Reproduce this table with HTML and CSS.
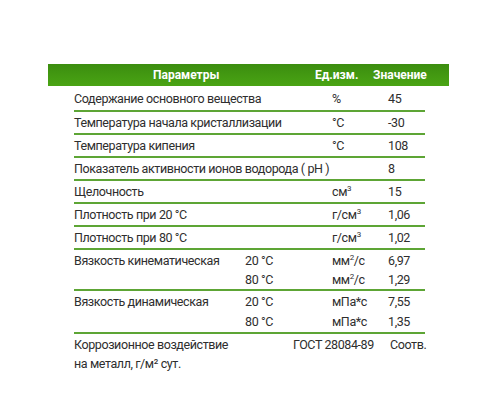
FILE: index.html
```html
<!DOCTYPE html>
<html lang="ru">
<head>
<meta charset="utf-8">
<link rel="stylesheet" href="styles.css">
</head>
<body>
<div class="wrap">
  <div class="head">
    <span class="h-param">Параметры</span>
    <span class="h-unit">Ед.изм.</span>
    <span class="h-val">Значение</span>
  </div>
  <div class="table">
    <div class="row first"><span class="name wide">Содержание основного вещества</span><span class="unit">%</span><span class="val">45</span></div>
    <div class="row"><span class="name wide">Температура начала кристаллизации</span><span class="unit">°C</span><span class="val">-30</span></div>
    <div class="row"><span class="name wide">Температура кипения</span><span class="unit">°C</span><span class="val">108</span></div>
    <div class="row"><span class="name wide">Показатель активности ионов водорода ( pH )</span><span class="unit"></span><span class="val">8</span></div>
    <div class="row"><span class="name wide">Щелочность</span><span class="unit">см<sup>3</sup></span><span class="val">15</span></div>
    <div class="row"><span class="name wide">Плотность при 20 °C</span><span class="unit">г/см<sup>3</sup></span><span class="val">1,06</span></div>
    <div class="row"><span class="name wide">Плотность при 80 °C</span><span class="unit">г/см<sup>3</sup></span><span class="val">1,02</span></div>
    <div class="row double kin">
      <span class="name">Вязкость кинематическая</span><span class="temp">20 °C</span><span class="unit">мм<sup>2</sup>/с</span><span class="val">6,97</span>
      <span class="name"></span><span class="temp">80 °C</span><span class="unit">мм<sup>2</sup>/с</span><span class="val">1,29</span>
    </div>
    <div class="row double dyn">
      <span class="name">Вязкость динамическая</span><span class="temp">20 °C</span><span class="unit">мПа*с</span><span class="val">7,55</span>
      <span class="name"></span><span class="temp">80 °C</span><span class="unit">мПа*с</span><span class="val">1,35</span>
    </div>
    <div class="row last">
      <span class="name">Коррозионное воздействие<br>на металл, г/м² сут.</span><span class="gost">ГОСТ 28084-89</span><span class="val">Соотв.</span>
    </div>
  </div>
</div>
</body>
</html>
```
FILE: styles.css
```css
html, body {
  margin: 0;
  padding: 0;
  background: #ffffff;
}
body {
  font-family: Roboto, "Liberation Sans", sans-serif;
  color: #2e2e2e;
  font-size: 12.5px;
  letter-spacing: -0.4px;
}
.wrap {
  padding-top: 64px;
  padding-left: 48px;
  width: 401px;
}
.head {
  height: 22px;
  background: linear-gradient(to bottom, #3b8d0f 0%, #4aa414 100%);
  color: #ffffff;
  font-weight: 700;
  font-size: 12px;
  letter-spacing: 0;
  display: flex;
  align-items: center;
}
.h-param { margin-left: 105px; width: 162px; }
.h-unit { width: 58px; }
.table {
  margin: 0 24px 0 26px;
  padding-top: 2px;
}
.row {
  display: grid;
  grid-template-columns: 171px 87px 56px 1fr;
  align-items: center;
  height: 21px;
  border-bottom: 2px solid #5da535;
  line-height: 20px;
}
.row.first { height: 22px; }
.row .wide { grid-column: 1 / 3; white-space: nowrap; }
.row.double { height: auto; }
.row.kin span { height: 19px; line-height: 19px; }
.row.kin { padding-top: 1px; }
.row.dyn span { height: 20px; }
.row.dyn { padding-top: 1px; }
.row.last {
  height: auto;
  border-bottom: none;
  grid-template-columns: 219px 97px 1fr;
  align-items: start;
  padding-top: 1px;
  line-height: 19px;
}
sup {
  font-size: 8px;
  line-height: 0;
  vertical-align: 5px;
}
```
